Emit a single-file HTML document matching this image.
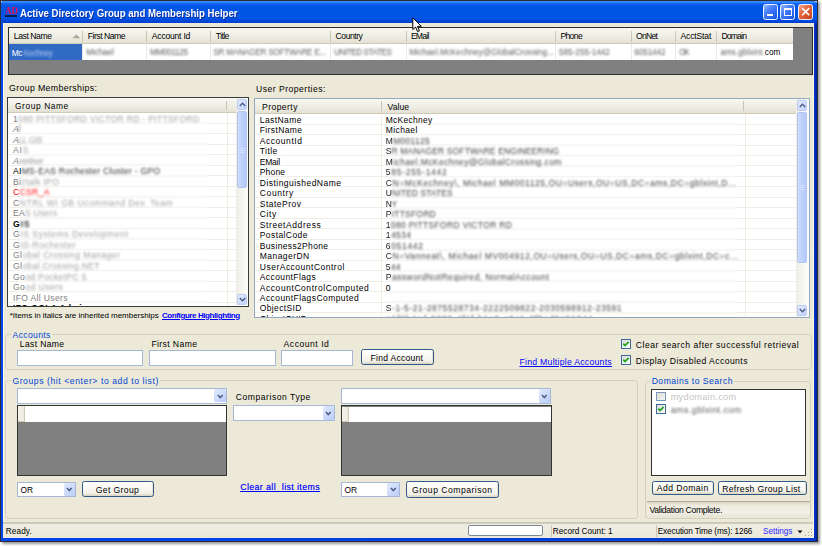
<!DOCTYPE html>
<html><head><meta charset="utf-8">
<style>
*{box-sizing:border-box;margin:0;padding:0}
html,body{width:822px;height:546px;overflow:hidden;background:#fff}
body{position:relative;font-family:"Liberation Sans",sans-serif;color:#000}
.a{position:absolute}
.t{position:absolute;white-space:pre;line-height:1;font-size:9.4px}
.s{font-size:8.4px}
.bl{filter:blur(0.8px)}
.lnk{color:#0000ff;text-decoration:underline}
.gb{position:absolute;border:1px solid #D0D0BF;border-radius:3px}
.gbl{position:absolute;white-space:pre;line-height:1;font-size:9.4px;color:#0046D5;background:#ECE9D8;padding:0 1px}
.tb{position:absolute;background:#fff;border:1px solid #7F9DB9}
.btn{position:absolute;border:1px solid #003C74;border-radius:2.5px;background:linear-gradient(#FFFFFF,#F6F5F0 60%,#E6E4DA);box-shadow:inset 0 -1px 0 #D8D2BD}
.cmb{position:absolute;background:#fff;border:1px solid #A5B9D5}
.cmbb{position:absolute;width:11px;background:linear-gradient(135deg,#DCE6FE,#B8CBF8);border-radius:1px}
.chk{position:absolute;width:10px;height:10px;border:1.2px solid #3D6A99;background:linear-gradient(135deg,#DCDCD7,#FFFFFF)}
.hdr{position:absolute;background:linear-gradient(#F8F7F1,#EEEDE3 60%,#E4E1D3);border-bottom:1.2px solid #D0CBB6}
.sb{position:absolute;border:1px solid #B2C6F5;border-radius:2px;background:linear-gradient(90deg,#CFDCFD,#BDD0FC 50%,#B6CAF9)}
.sbb{position:absolute;border:1px solid #BCCCF4;border-radius:2px;background:linear-gradient(135deg,#E4EBFE,#C3D3FD)}
</style></head><body>
<div class="a" style="left:1.00px;top:1.00px;width:817.00px;height:540.60px;box-shadow:1.5px 1.5px 2.5px 0.5px rgba(0,0,0,0.4)"></div>
<div class="a" style="left:0.00px;top:0.00px;width:818.00px;height:541.60px;background:#2C2E36"></div>
<div class="a" style="left:1.00px;top:0.80px;width:816.00px;height:540.00px;background:linear-gradient(90deg,#0046EE 0,#0046EE 2px,#003AD8 calc(100% - 3px),#001A90 100%)"></div>
<div class="a" style="left:1.00px;top:0.80px;width:816.00px;height:22.00px;background:linear-gradient(#3D8EFF 0,#2F82FF 1.5px,#0A5DF0 3px,#0055E4 6px,#0055E6 17px,#0047D9 20px,#003BCF 22px)"></div>
<div class="a" style="left:3.00px;top:22.80px;width:811.00px;height:515.20px;background:#ECE9D8"></div>
<div class="a" style="left:1.00px;top:1.00px;width:1.40px;height:1.40px;background:radial-gradient(circle,#F4F8FF 0,#BFD4FF 60%,rgba(60,140,255,0) 100%)"></div>
<div class="a" style="left:815.40px;top:1.00px;width:1.40px;height:1.40px;background:radial-gradient(circle,#E0EAFF 0,#A8C4FF 60%,rgba(60,140,255,0) 100%)"></div>
<div class="a" style="left:3.00px;top:22.80px;width:0.60px;height:515.20px;background:#FDF8E4"></div>
<div class="a" style="left:813.40px;top:22.80px;width:0.60px;height:515.20px;background:#FDF8E4"></div>
<div class="t" style="left:4.9px;top:6.1px;font-size:9.6px;font-weight:bold;color:#E8105A;letter-spacing:-0.2px;font-family:'Liberation Serif',serif;transform-origin:0 0;transform:scaleX(0.95)">AD</div>
<div class="a" style="left:4.90px;top:15.10px;width:11.80px;height:1.50px;background:#0A1E48"></div>
<div class="t" style="left:20px;top:7.6px;font-size:11.2px;font-weight:bold;color:#fff;text-shadow:0.8px 0.8px 0 #0B2690;transform-origin:0 0;transform:scaleX(0.862)">Active Directory Group and Membership Helper</div>
<div class="a" style="left:763.00px;top:4.40px;width:15.30px;height:15.60px;border:1px solid #F0F4FF;border-radius:2.5px;background:linear-gradient(135deg,#9BBCFF,#4C83F8 35%,#2C66F0 70%,#1E56E6)"></div>
<div class="a" style="left:780.20px;top:4.40px;width:15.30px;height:15.60px;border:1px solid #F0F4FF;border-radius:2.5px;background:linear-gradient(135deg,#9BBCFF,#4C83F8 35%,#2C66F0 70%,#1E56E6)"></div>
<div class="a" style="left:797.60px;top:4.40px;width:15.30px;height:15.60px;border:1px solid #F0F4FF;border-radius:2.5px;background:linear-gradient(135deg,#F4A890,#E46A44 40%,#D4502A 75%,#C23C18)"></div>
<div class="a" style="left:767.20px;top:14.20px;width:5.40px;height:2.00px;background:#fff"></div>
<div class="a" style="left:784.00px;top:7.80px;width:8.20px;height:8.40px;border:1.1px solid #fff;border-top-width:2.2px"></div>
<svg class="a" style="left:797.6px;top:4.4px" width="16" height="16" viewBox="0 0 16 16"><path d="M4.6 4.6 L10.8 10.8 M10.8 4.6 L4.6 10.8" stroke="#fff" stroke-width="1.6" stroke-linecap="round"/></svg>
<div class="a" style="left:7.50px;top:27.00px;width:805.50px;height:48.00px;background:#808080;border:1.3px solid #2C2C2C"></div>
<div class="hdr" style="left:8.8px;top:28.3px;width:784px;height:15.5px"></div>
<div class="a" style="left:8.80px;top:43.80px;width:784.00px;height:15.80px;background:#fff"></div>
<div class="a" style="left:8.80px;top:43.80px;width:74.20px;height:15.80px;background:#316AC5"></div>
<div class="t s" style="left:13.80px;top:31.63px;font-size:8.6px;color:#000;letter-spacing:-0.422px;">Last Name</div>
<div class="t s" style="left:87.80px;top:31.63px;font-size:8.6px;color:#000;letter-spacing:-0.482px;">First Name</div>
<div class="a" style="left:82.40px;top:30.80px;width:1.00px;height:11.00px;background:#CAC6B4"></div>
<div class="a" style="left:82.40px;top:43.80px;width:1.00px;height:15.80px;background:#EDEBE3"></div>
<div class="t s" style="left:151.80px;top:31.63px;font-size:8.6px;color:#000;letter-spacing:-0.225px;">Account Id</div>
<div class="a" style="left:146.40px;top:30.80px;width:1.00px;height:11.00px;background:#CAC6B4"></div>
<div class="a" style="left:146.40px;top:43.80px;width:1.00px;height:15.80px;background:#EDEBE3"></div>
<div class="t s" style="left:215.80px;top:31.63px;font-size:8.6px;color:#000;letter-spacing:-0.584px;">Title</div>
<div class="a" style="left:210.40px;top:30.80px;width:1.00px;height:11.00px;background:#CAC6B4"></div>
<div class="a" style="left:210.40px;top:43.80px;width:1.00px;height:15.80px;background:#EDEBE3"></div>
<div class="t s" style="left:335.60px;top:31.63px;font-size:8.6px;color:#000;letter-spacing:-0.466px;">Country</div>
<div class="a" style="left:330.20px;top:30.80px;width:1.00px;height:11.00px;background:#CAC6B4"></div>
<div class="a" style="left:330.20px;top:43.80px;width:1.00px;height:15.80px;background:#EDEBE3"></div>
<div class="t s" style="left:410.90px;top:31.63px;font-size:8.6px;color:#000;letter-spacing:-0.770px;">EMail</div>
<div class="a" style="left:405.50px;top:30.80px;width:1.00px;height:11.00px;background:#CAC6B4"></div>
<div class="a" style="left:405.50px;top:43.80px;width:1.00px;height:15.80px;background:#EDEBE3"></div>
<div class="t s" style="left:560.40px;top:31.63px;font-size:8.6px;color:#000;letter-spacing:-0.643px;">Phone</div>
<div class="a" style="left:555.00px;top:30.80px;width:1.00px;height:11.00px;background:#CAC6B4"></div>
<div class="a" style="left:555.00px;top:43.80px;width:1.00px;height:15.80px;background:#EDEBE3"></div>
<div class="t s" style="left:636.00px;top:31.63px;font-size:8.6px;color:#000;letter-spacing:-0.762px;">OnNet</div>
<div class="a" style="left:630.60px;top:30.80px;width:1.00px;height:11.00px;background:#CAC6B4"></div>
<div class="a" style="left:630.60px;top:43.80px;width:1.00px;height:15.80px;background:#EDEBE3"></div>
<div class="t s" style="left:680.50px;top:31.63px;font-size:8.6px;color:#000;letter-spacing:-0.173px;">AcctStat</div>
<div class="a" style="left:675.10px;top:30.80px;width:1.00px;height:11.00px;background:#CAC6B4"></div>
<div class="a" style="left:675.10px;top:43.80px;width:1.00px;height:15.80px;background:#EDEBE3"></div>
<div class="t s" style="left:721.40px;top:31.63px;font-size:8.6px;color:#000;letter-spacing:-0.807px;">Domain</div>
<div class="a" style="left:716.00px;top:30.80px;width:1.00px;height:11.00px;background:#CAC6B4"></div>
<div class="a" style="left:716.00px;top:43.80px;width:1.00px;height:15.80px;background:#EDEBE3"></div>
<svg class="a" style="left:72.2px;top:33.8px" width="9" height="5" viewBox="0 0 9 5"><path d="M0.4 4.3 L4.3 0.4 L8.2 4.3Z" fill="#ACA899"/></svg>
<div class="t s" style="left:11.80px;top:49.26px;font-size:8.4px;color:#fff;letter-spacing:-0.476px;">Mc</div>
<div class="t s" style="left:23.80px;top:49.26px;font-size:8.4px;color:#B0C6EE;letter-spacing:-0.567px;filter:blur(1.1px);">Kechney</div>
<div class="t s" style="left:86.30px;top:49.28px;font-size:8.2px;color:#4A4A4A;letter-spacing:-0.116px;filter:blur(0.85px);opacity:0.9;">Michael</div>
<div class="t s" style="left:150.00px;top:49.28px;font-size:8.2px;color:#4A4A4A;letter-spacing:-0.328px;filter:blur(0.85px);opacity:0.9;">MM001125</div>
<div class="t s" style="left:213.40px;top:49.28px;font-size:8.2px;color:#4A4A4A;letter-spacing:-0.235px;filter:blur(0.85px);opacity:0.9;">SR MANAGER SOFTWARE E...</div>
<div class="t s" style="left:334.00px;top:49.28px;font-size:8.2px;color:#4A4A4A;letter-spacing:-0.452px;filter:blur(0.85px);opacity:0.9;">UNITED STATES</div>
<div class="t s" style="left:409.50px;top:49.28px;font-size:8.2px;color:#4A4A4A;letter-spacing:-0.003px;filter:blur(0.85px);opacity:0.9;">Michael.McKechney@GlobalCrossing...</div>
<div class="t s" style="left:559.00px;top:49.28px;font-size:8.2px;color:#4A4A4A;letter-spacing:-0.012px;filter:blur(0.85px);opacity:0.9;">585-255-1442</div>
<div class="t s" style="left:634.30px;top:49.28px;font-size:8.2px;color:#4A4A4A;letter-spacing:-0.103px;filter:blur(0.85px);opacity:0.9;">6051442</div>
<div class="t s" style="left:679.20px;top:49.28px;font-size:8.2px;color:#4A4A4A;letter-spacing:-1.368px;filter:blur(0.85px);opacity:0.9;">OK</div>
<div class="t s" style="left:720.40px;top:49.28px;font-size:8.2px;color:#4A4A4A;letter-spacing:0.054px;filter:blur(0.85px);opacity:0.9;">ams.gblxint.</div>
<div class="t s" style="left:764.80px;top:49.28px;font-size:8.2px;color:#000;">com</div>
<div class="t" style="left:9.00px;top:83.91px;font-size:8.8px;color:#000;letter-spacing:0.342px;">Group Memberships:</div>
<div class="t" style="left:256.00px;top:84.83px;font-size:8.6px;color:#000;letter-spacing:0.487px;">User Properties:</div>
<div class="a" style="left:7.3px;top:97.3px;width:241.70px;height:209.40px;background:#fff;border:1.4px solid #3A3A3A;overflow:hidden">
 <div class="hdr" style="left:0;top:0;width:228.10px;height:14.30px"></div>
 <div class="a" style="left:218.10px;top:2.30px;width:1.00px;height:9.50px;background:#C9C5B4"></div>
 <div class="t" style="left:6.70px;top:3.46px;font-size:8.4px;color:#000;letter-spacing:0.590px;">Group Name</div>
 <div class="a" style="left:0.30px;top:24.33px;width:11.50px;height:1.00px;background:#EFEDE4"></div>
 <div class="a" style="left:11.80px;top:23.03px;width:187.30px;height:3.60px;background:linear-gradient(rgba(239,237,228,0),rgba(239,237,228,0.55) 50%,rgba(239,237,228,0))"></div>
 <div class="a" style="left:199.10px;top:24.33px;width:29.00px;height:1.00px;background:#EFEDE4"></div>
 <div class="t" style="left:4.70px;top:16.23px;font-size:8.6px;color:#808080;letter-spacing:0.291px;">1<span style="display:inline-block;filter:blur(0.8px);opacity:0.75">080 PITTSFORD VICTOR RD - PITTSFORD</span></div>
 <div class="a" style="left:0.30px;top:34.87px;width:11.50px;height:1.00px;background:#EFEDE4"></div>
 <div class="a" style="left:11.80px;top:33.57px;width:187.30px;height:3.60px;background:linear-gradient(rgba(239,237,228,0),rgba(239,237,228,0.55) 50%,rgba(239,237,228,0))"></div>
 <div class="a" style="left:199.10px;top:34.87px;width:29.00px;height:1.00px;background:#EFEDE4"></div>
 <div class="t" style="left:4.70px;top:26.77px;font-size:8.6px;color:#808080;letter-spacing:-1.071px;font-style:italic;">A<span style="display:inline-block;filter:blur(0.8px);opacity:0.75">ll</span></div>
 <div class="a" style="left:0.30px;top:45.40px;width:11.50px;height:1.00px;background:#EFEDE4"></div>
 <div class="a" style="left:11.80px;top:44.10px;width:187.30px;height:3.60px;background:linear-gradient(rgba(239,237,228,0),rgba(239,237,228,0.55) 50%,rgba(239,237,228,0))"></div>
 <div class="a" style="left:199.10px;top:45.40px;width:29.00px;height:1.00px;background:#EFEDE4"></div>
 <div class="t" style="left:4.70px;top:37.30px;font-size:8.6px;color:#808080;letter-spacing:-0.458px;font-style:italic;">A<span style="display:inline-block;filter:blur(0.8px);opacity:0.75">LL GIS</span></div>
 <div class="a" style="left:0.30px;top:55.94px;width:11.50px;height:1.00px;background:#EFEDE4"></div>
 <div class="a" style="left:11.80px;top:54.64px;width:187.30px;height:3.60px;background:linear-gradient(rgba(239,237,228,0),rgba(239,237,228,0.55) 50%,rgba(239,237,228,0))"></div>
 <div class="a" style="left:199.10px;top:55.94px;width:29.00px;height:1.00px;background:#EFEDE4"></div>
 <div class="t" style="left:4.70px;top:47.84px;font-size:8.6px;color:#808080;letter-spacing:0.840px;">AI<span style="display:inline-block;filter:blur(0.8px);opacity:0.75">S</span></div>
 <div class="a" style="left:0.30px;top:66.47px;width:11.50px;height:1.00px;background:#EFEDE4"></div>
 <div class="a" style="left:11.80px;top:65.17px;width:187.30px;height:3.60px;background:linear-gradient(rgba(239,237,228,0),rgba(239,237,228,0.55) 50%,rgba(239,237,228,0))"></div>
 <div class="a" style="left:199.10px;top:66.47px;width:29.00px;height:1.00px;background:#EFEDE4"></div>
 <div class="t" style="left:4.70px;top:58.37px;font-size:8.6px;color:#808080;letter-spacing:-0.411px;font-style:italic;">A<span style="display:inline-block;filter:blur(0.8px);opacity:0.75">vertiser</span></div>
 <div class="a" style="left:0.30px;top:77.01px;width:11.50px;height:1.00px;background:#EFEDE4"></div>
 <div class="a" style="left:11.80px;top:75.71px;width:187.30px;height:3.60px;background:linear-gradient(rgba(239,237,228,0),rgba(239,237,228,0.55) 50%,rgba(239,237,228,0))"></div>
 <div class="a" style="left:199.10px;top:77.01px;width:29.00px;height:1.00px;background:#EFEDE4"></div>
 <div class="t" style="left:4.70px;top:68.91px;font-size:8.6px;color:#000000;letter-spacing:0.265px;">AI<span style="display:inline-block;filter:blur(0.8px);opacity:0.85">MS-EAS Rochester Cluster - GPO</span></div>
 <div class="a" style="left:0.30px;top:87.55px;width:11.50px;height:1.00px;background:#EFEDE4"></div>
 <div class="a" style="left:11.80px;top:86.24px;width:187.30px;height:3.60px;background:linear-gradient(rgba(239,237,228,0),rgba(239,237,228,0.55) 50%,rgba(239,237,228,0))"></div>
 <div class="a" style="left:199.10px;top:87.55px;width:29.00px;height:1.00px;background:#EFEDE4"></div>
 <div class="t" style="left:4.70px;top:79.44px;font-size:8.6px;color:#808080;letter-spacing:0.338px;">Bi<span style="display:inline-block;filter:blur(0.8px);opacity:0.75">ztalk IPO</span></div>
 <div class="a" style="left:0.30px;top:98.08px;width:11.50px;height:1.00px;background:#EFEDE4"></div>
 <div class="a" style="left:11.80px;top:96.78px;width:187.30px;height:3.60px;background:linear-gradient(rgba(239,237,228,0),rgba(239,237,228,0.55) 50%,rgba(239,237,228,0))"></div>
 <div class="a" style="left:199.10px;top:98.08px;width:29.00px;height:1.00px;background:#EFEDE4"></div>
 <div class="t" style="left:4.70px;top:89.98px;font-size:8.6px;color:#FF0000;letter-spacing:0.314px;">C<span style="display:inline-block;filter:blur(0.8px);opacity:0.95">CSR_A</span></div>
 <div class="a" style="left:0.30px;top:108.61px;width:11.50px;height:1.00px;background:#EFEDE4"></div>
 <div class="a" style="left:11.80px;top:107.31px;width:187.30px;height:3.60px;background:linear-gradient(rgba(239,237,228,0),rgba(239,237,228,0.55) 50%,rgba(239,237,228,0))"></div>
 <div class="a" style="left:199.10px;top:108.61px;width:29.00px;height:1.00px;background:#EFEDE4"></div>
 <div class="t" style="left:4.70px;top:100.51px;font-size:8.6px;color:#808080;letter-spacing:0.506px;">C<span style="display:inline-block;filter:blur(0.8px);opacity:0.75">NTRL WI GB Ucommand Dev. Team</span></div>
 <div class="a" style="left:0.30px;top:119.15px;width:11.50px;height:1.00px;background:#EFEDE4"></div>
 <div class="a" style="left:11.80px;top:117.85px;width:187.30px;height:3.60px;background:linear-gradient(rgba(239,237,228,0),rgba(239,237,228,0.55) 50%,rgba(239,237,228,0))"></div>
 <div class="a" style="left:199.10px;top:119.15px;width:29.00px;height:1.00px;background:#EFEDE4"></div>
 <div class="t" style="left:4.70px;top:111.05px;font-size:8.6px;color:#808080;letter-spacing:0.247px;">EA<span style="display:inline-block;filter:blur(0.8px);opacity:0.75">S Users</span></div>
 <div class="a" style="left:0.30px;top:129.69px;width:11.50px;height:1.00px;background:#EFEDE4"></div>
 <div class="a" style="left:11.80px;top:128.38px;width:187.30px;height:3.60px;background:linear-gradient(rgba(239,237,228,0),rgba(239,237,228,0.55) 50%,rgba(239,237,228,0))"></div>
 <div class="a" style="left:199.10px;top:129.69px;width:29.00px;height:1.00px;background:#EFEDE4"></div>
 <div class="t" style="left:4.70px;top:121.58px;font-size:8.6px;color:#000000;letter-spacing:0.814px;font-weight:bold;">G<span style="display:inline-block;filter:blur(0.8px);opacity:0.85">IS</span></div>
 <div class="a" style="left:0.30px;top:140.22px;width:11.50px;height:1.00px;background:#EFEDE4"></div>
 <div class="a" style="left:11.80px;top:138.92px;width:187.30px;height:3.60px;background:linear-gradient(rgba(239,237,228,0),rgba(239,237,228,0.55) 50%,rgba(239,237,228,0))"></div>
 <div class="a" style="left:199.10px;top:140.22px;width:29.00px;height:1.00px;background:#EFEDE4"></div>
 <div class="t" style="left:4.70px;top:132.12px;font-size:8.6px;color:#808080;letter-spacing:0.542px;">G<span style="display:inline-block;filter:blur(0.8px);opacity:0.75">IS Systems Development</span></div>
 <div class="a" style="left:0.30px;top:150.75px;width:11.50px;height:1.00px;background:#EFEDE4"></div>
 <div class="a" style="left:11.80px;top:149.45px;width:187.30px;height:3.60px;background:linear-gradient(rgba(239,237,228,0),rgba(239,237,228,0.55) 50%,rgba(239,237,228,0))"></div>
 <div class="a" style="left:199.10px;top:150.75px;width:29.00px;height:1.00px;background:#EFEDE4"></div>
 <div class="t" style="left:4.70px;top:142.65px;font-size:8.6px;color:#808080;letter-spacing:0.477px;">G<span style="display:inline-block;filter:blur(0.8px);opacity:0.75">IS-Rochester</span></div>
 <div class="a" style="left:0.30px;top:161.29px;width:11.50px;height:1.00px;background:#EFEDE4"></div>
 <div class="a" style="left:11.80px;top:159.99px;width:187.30px;height:3.60px;background:linear-gradient(rgba(239,237,228,0),rgba(239,237,228,0.55) 50%,rgba(239,237,228,0))"></div>
 <div class="a" style="left:199.10px;top:161.29px;width:29.00px;height:1.00px;background:#EFEDE4"></div>
 <div class="t" style="left:4.70px;top:153.19px;font-size:8.6px;color:#808080;letter-spacing:0.424px;">Gl<span style="display:inline-block;filter:blur(0.8px);opacity:0.75">obal Crossing Manager</span></div>
 <div class="a" style="left:0.30px;top:171.83px;width:11.50px;height:1.00px;background:#EFEDE4"></div>
 <div class="a" style="left:11.80px;top:170.53px;width:187.30px;height:3.60px;background:linear-gradient(rgba(239,237,228,0),rgba(239,237,228,0.55) 50%,rgba(239,237,228,0))"></div>
 <div class="a" style="left:199.10px;top:171.83px;width:29.00px;height:1.00px;background:#EFEDE4"></div>
 <div class="t" style="left:4.70px;top:163.72px;font-size:8.6px;color:#808080;letter-spacing:0.324px;">Gl<span style="display:inline-block;filter:blur(0.8px);opacity:0.75">obal.Crossing.NET</span></div>
 <div class="a" style="left:0.30px;top:182.36px;width:11.50px;height:1.00px;background:#EFEDE4"></div>
 <div class="a" style="left:11.80px;top:181.06px;width:187.30px;height:3.60px;background:linear-gradient(rgba(239,237,228,0),rgba(239,237,228,0.55) 50%,rgba(239,237,228,0))"></div>
 <div class="a" style="left:199.10px;top:182.36px;width:29.00px;height:1.00px;background:#EFEDE4"></div>
 <div class="t" style="left:4.70px;top:174.26px;font-size:8.6px;color:#808080;letter-spacing:0.335px;">Go<span style="display:inline-block;filter:blur(0.8px);opacity:0.75">od PocketPC 5</span></div>
 <div class="a" style="left:0.30px;top:192.90px;width:11.50px;height:1.00px;background:#EFEDE4"></div>
 <div class="a" style="left:11.80px;top:191.60px;width:187.30px;height:3.60px;background:linear-gradient(rgba(239,237,228,0),rgba(239,237,228,0.55) 50%,rgba(239,237,228,0))"></div>
 <div class="a" style="left:199.10px;top:192.90px;width:29.00px;height:1.00px;background:#EFEDE4"></div>
 <div class="t" style="left:4.70px;top:184.79px;font-size:8.6px;color:#808080;letter-spacing:0.427px;">Go<span style="display:inline-block;filter:blur(0.8px);opacity:0.75">od Users</span></div>
 <div class="a" style="left:0.30px;top:203.43px;width:11.50px;height:1.00px;background:#EFEDE4"></div>
 <div class="a" style="left:11.80px;top:202.13px;width:187.30px;height:3.60px;background:linear-gradient(rgba(239,237,228,0),rgba(239,237,228,0.55) 50%,rgba(239,237,228,0))"></div>
 <div class="a" style="left:199.10px;top:203.43px;width:29.00px;height:1.00px;background:#EFEDE4"></div>
 <div class="t" style="left:4.70px;top:195.33px;font-size:8.6px;color:#808080;letter-spacing:0.326px;">IFO All Users</div>
 <div class="a" style="left:0.30px;top:213.97px;width:11.50px;height:1.00px;background:#EFEDE4"></div>
 <div class="a" style="left:11.80px;top:212.67px;width:187.30px;height:3.60px;background:linear-gradient(rgba(239,237,228,0),rgba(239,237,228,0.55) 50%,rgba(239,237,228,0))"></div>
 <div class="a" style="left:199.10px;top:213.97px;width:29.00px;height:1.00px;background:#EFEDE4"></div>
 <div class="t" style="left:4.70px;top:205.86px;font-size:8.6px;color:#000000;letter-spacing:0.276px;font-weight:bold;">IFO-GOLA Admins</div>
 <div class="a" style="left:219.20px;top:14.30px;width:1.00px;height:193.00px;background:#EFEDE4"></div>
 <div class="a" style="left:228.10px;top:0.00px;width:11.20px;height:206.70px;background:linear-gradient(90deg,#EEEDE5,#FDFDFA)"></div>
 <div class="a" style="left:228.40px;top:0.70px;width:10.50px;height:11.20px;border:1px solid #BCCCF4;border-radius:2px;background:linear-gradient(135deg,#E4EBFE,#C3D3FD)"></div>
 <svg class="a" style="left:230.60px;top:3.90px" width="7" height="5" viewBox="0 0 7 5"><path d="M0.7 4 L3.5 1.2 L6.3 4" stroke="#4D6185" stroke-width="1.4" fill="none"/></svg>
 <div class="a" style="left:228.40px;top:12.30px;width:10.50px;height:77.80px;border:1px solid #B2C6F5;border-radius:2px;background:linear-gradient(90deg,#CFDCFD,#BDD0FC 50%,#B6CAF9)"></div>
 <div class="a" style="left:231.30px;top:49.30px;width:5.00px;height:1.00px;background:#D4E0FD"></div>
 <div class="a" style="left:231.30px;top:51.30px;width:5.00px;height:1.00px;background:#D4E0FD"></div>
 <div class="a" style="left:231.30px;top:53.30px;width:5.00px;height:1.00px;background:#D4E0FD"></div>
 <div class="a" style="left:228.40px;top:195.50px;width:10.50px;height:11.00px;border:1px solid #BCCCF4;border-radius:2px;background:linear-gradient(135deg,#E4EBFE,#C3D3FD)"></div>
 <svg class="a" style="left:230.60px;top:198.70px" width="7" height="5" viewBox="0 0 7 5"><path d="M0.7 1 L3.5 3.8 L6.3 1" stroke="#4D6185" stroke-width="1.4" fill="none"/></svg>
</div>
<div class="t s" style="left:9.70px;top:311.81px;font-size:8.0px;color:#000;letter-spacing:-0.028px;">*Items in italics are inherited memberships</div>
<div class="t s" style="left:162.00px;top:311.81px;font-size:8.0px;color:#0000FF;letter-spacing:-0.408px;font-weight:bold;text-decoration:underline;text-underline-offset:0.9px;">Configure Highlighting</div>
<div class="a" style="left:253.6px;top:97.8px;width:556.40px;height:220.20px;background:#fff;border:1px solid #93A9C2;overflow:hidden">
 <div class="hdr" style="left:0;top:0;width:541.80px;height:14.80px"></div>
 <div class="a" style="left:126.00px;top:2.70px;width:1.00px;height:9.50px;background:#C9C5B4"></div>
 <div class="a" style="left:488.30px;top:2.70px;width:1.00px;height:9.50px;background:#C9C5B4"></div>
 <div class="t" style="left:7.40px;top:3.83px;font-size:8.6px;color:#000;letter-spacing:0.431px;">Property</div>
 <div class="t" style="left:133.00px;top:3.83px;font-size:8.6px;color:#000;">Value</div>
 <div class="a" style="left:0.00px;top:24.78px;width:134.40px;height:1.00px;background:#EFEDE4"></div>
 <div class="a" style="left:134.40px;top:23.48px;width:347.30px;height:3.60px;background:linear-gradient(rgba(239,237,228,0),rgba(239,237,228,0.55) 50%,rgba(239,237,228,0))"></div>
 <div class="a" style="left:481.70px;top:24.78px;width:60.10px;height:1.00px;background:#EFEDE4"></div>
 <div class="t" style="left:5.20px;top:17.05px;font-size:8.5px;color:#000;letter-spacing:0.427px;">LastName</div>
 <div class="t" style="left:131.20px;top:17.05px;font-size:8.5px;color:#000;letter-spacing:0.255px;">McKechney</div>
 <div class="a" style="left:0.00px;top:35.26px;width:134.40px;height:1.00px;background:#EFEDE4"></div>
 <div class="a" style="left:134.40px;top:33.96px;width:347.30px;height:3.60px;background:linear-gradient(rgba(239,237,228,0),rgba(239,237,228,0.55) 50%,rgba(239,237,228,0))"></div>
 <div class="a" style="left:481.70px;top:35.26px;width:60.10px;height:1.00px;background:#EFEDE4"></div>
 <div class="t" style="left:5.20px;top:27.53px;font-size:8.5px;color:#000;letter-spacing:0.366px;">FirstName</div>
 <div class="t" style="left:131.20px;top:27.53px;font-size:8.5px;color:#000;letter-spacing:0.383px;">Michael</div>
 <div class="a" style="left:0.00px;top:45.74px;width:134.40px;height:1.00px;background:#EFEDE4"></div>
 <div class="a" style="left:134.40px;top:44.44px;width:347.30px;height:3.60px;background:linear-gradient(rgba(239,237,228,0),rgba(239,237,228,0.55) 50%,rgba(239,237,228,0))"></div>
 <div class="a" style="left:481.70px;top:45.74px;width:60.10px;height:1.00px;background:#EFEDE4"></div>
 <div class="t" style="left:5.20px;top:38.01px;font-size:8.5px;color:#000;letter-spacing:0.541px;">AccountId</div>
 <div class="t" style="left:131.20px;top:38.01px;font-size:8.5px;color:#000;letter-spacing:0.290px"><span style="display:inline-block;filter:blur(0.55px);opacity:0.9">M</span><span style="display:inline-block;filter:blur(0.8px);opacity:0.78">M001125</span></div>
 <div class="a" style="left:0.00px;top:56.22px;width:134.40px;height:1.00px;background:#EFEDE4"></div>
 <div class="a" style="left:134.40px;top:54.92px;width:347.30px;height:3.60px;background:linear-gradient(rgba(239,237,228,0),rgba(239,237,228,0.55) 50%,rgba(239,237,228,0))"></div>
 <div class="a" style="left:481.70px;top:56.22px;width:60.10px;height:1.00px;background:#EFEDE4"></div>
 <div class="t" style="left:5.20px;top:48.48px;font-size:8.5px;color:#000;letter-spacing:0.421px;">Title</div>
 <div class="t" style="left:131.20px;top:48.48px;font-size:8.5px;color:#000;letter-spacing:0.133px"><span style="display:inline-block;filter:blur(0.55px);opacity:0.9">S</span><span style="display:inline-block;filter:blur(0.8px);opacity:0.78">R MANAGER SOFTWARE ENGINEERING</span></div>
 <div class="a" style="left:0.00px;top:66.70px;width:134.40px;height:1.00px;background:#EFEDE4"></div>
 <div class="a" style="left:134.40px;top:65.40px;width:347.30px;height:3.60px;background:linear-gradient(rgba(239,237,228,0),rgba(239,237,228,0.55) 50%,rgba(239,237,228,0))"></div>
 <div class="a" style="left:481.70px;top:66.70px;width:60.10px;height:1.00px;background:#EFEDE4"></div>
 <div class="t" style="left:5.20px;top:58.96px;font-size:8.5px;color:#000;letter-spacing:-0.241px;">EMail</div>
 <div class="t" style="left:131.20px;top:58.96px;font-size:8.5px;color:#000;letter-spacing:0.410px"><span style="display:inline-block;filter:blur(0.55px);opacity:0.9">M</span><span style="display:inline-block;filter:blur(0.8px);opacity:0.78">ichael.McKechney@GlobalCrossing.com</span></div>
 <div class="a" style="left:0.00px;top:77.18px;width:134.40px;height:1.00px;background:#EFEDE4"></div>
 <div class="a" style="left:134.40px;top:75.88px;width:347.30px;height:3.60px;background:linear-gradient(rgba(239,237,228,0),rgba(239,237,228,0.55) 50%,rgba(239,237,228,0))"></div>
 <div class="a" style="left:481.70px;top:77.18px;width:60.10px;height:1.00px;background:#EFEDE4"></div>
 <div class="t" style="left:5.20px;top:69.45px;font-size:8.5px;color:#000;letter-spacing:0.162px;">Phone</div>
 <div class="t" style="left:131.20px;top:69.45px;font-size:8.5px;color:#000;letter-spacing:0.727px"><span style="display:inline-block;filter:blur(0.55px);opacity:0.9">5</span><span style="display:inline-block;filter:blur(0.8px);opacity:0.78">85-255-1442</span></div>
 <div class="a" style="left:0.00px;top:87.66px;width:134.40px;height:1.00px;background:#EFEDE4"></div>
 <div class="a" style="left:134.40px;top:86.36px;width:347.30px;height:3.60px;background:linear-gradient(rgba(239,237,228,0),rgba(239,237,228,0.55) 50%,rgba(239,237,228,0))"></div>
 <div class="a" style="left:481.70px;top:87.66px;width:60.10px;height:1.00px;background:#EFEDE4"></div>
 <div class="t" style="left:5.20px;top:79.92px;font-size:8.5px;color:#000;letter-spacing:0.464px;">DistinguishedName</div>
 <div class="t" style="left:131.20px;top:79.92px;font-size:8.5px;color:#000;letter-spacing:0.566px"><span style="display:inline-block;filter:blur(0.55px);opacity:0.9">C</span><span style="display:inline-block;filter:blur(0.8px);opacity:0.78">N=McKechney\, Michael MM001125,OU=Users,OU=US,DC=ams,DC=gblxint,D...</span></div>
 <div class="a" style="left:0.00px;top:98.14px;width:134.40px;height:1.00px;background:#EFEDE4"></div>
 <div class="a" style="left:134.40px;top:96.84px;width:347.30px;height:3.60px;background:linear-gradient(rgba(239,237,228,0),rgba(239,237,228,0.55) 50%,rgba(239,237,228,0))"></div>
 <div class="a" style="left:481.70px;top:98.14px;width:60.10px;height:1.00px;background:#EFEDE4"></div>
 <div class="t" style="left:5.20px;top:90.40px;font-size:8.5px;color:#000;letter-spacing:0.615px;">Country</div>
 <div class="t" style="left:131.20px;top:90.40px;font-size:8.5px;color:#000;letter-spacing:0.089px"><span style="display:inline-block;filter:blur(0.55px);opacity:0.9">U</span><span style="display:inline-block;filter:blur(0.8px);opacity:0.78">NITED STATES</span></div>
 <div class="a" style="left:0.00px;top:108.62px;width:134.40px;height:1.00px;background:#EFEDE4"></div>
 <div class="a" style="left:134.40px;top:107.32px;width:347.30px;height:3.60px;background:linear-gradient(rgba(239,237,228,0),rgba(239,237,228,0.55) 50%,rgba(239,237,228,0))"></div>
 <div class="a" style="left:481.70px;top:108.62px;width:60.10px;height:1.00px;background:#EFEDE4"></div>
 <div class="t" style="left:5.20px;top:100.89px;font-size:8.5px;color:#000;letter-spacing:0.491px;">StateProv</div>
 <div class="t" style="left:131.20px;top:100.89px;font-size:8.5px;color:#000;letter-spacing:-0.438px"><span style="display:inline-block;filter:blur(0.55px);opacity:0.9">N</span><span style="display:inline-block;filter:blur(0.8px);opacity:0.78">Y</span></div>
 <div class="a" style="left:0.00px;top:119.10px;width:134.40px;height:1.00px;background:#EFEDE4"></div>
 <div class="a" style="left:134.40px;top:117.80px;width:347.30px;height:3.60px;background:linear-gradient(rgba(239,237,228,0),rgba(239,237,228,0.55) 50%,rgba(239,237,228,0))"></div>
 <div class="a" style="left:481.70px;top:119.10px;width:60.10px;height:1.00px;background:#EFEDE4"></div>
 <div class="t" style="left:5.20px;top:111.37px;font-size:8.5px;color:#000;letter-spacing:0.604px;">City</div>
 <div class="t" style="left:131.20px;top:111.37px;font-size:8.5px;color:#000;letter-spacing:0.209px"><span style="display:inline-block;filter:blur(0.55px);opacity:0.9">P</span><span style="display:inline-block;filter:blur(0.8px);opacity:0.78">ITTSFORD</span></div>
 <div class="a" style="left:0.00px;top:129.58px;width:134.40px;height:1.00px;background:#EFEDE4"></div>
 <div class="a" style="left:134.40px;top:128.28px;width:347.30px;height:3.60px;background:linear-gradient(rgba(239,237,228,0),rgba(239,237,228,0.55) 50%,rgba(239,237,228,0))"></div>
 <div class="a" style="left:481.70px;top:129.58px;width:60.10px;height:1.00px;background:#EFEDE4"></div>
 <div class="t" style="left:5.20px;top:121.85px;font-size:8.5px;color:#000;letter-spacing:0.591px;">StreetAddress</div>
 <div class="t" style="left:131.20px;top:121.85px;font-size:8.5px;color:#000;letter-spacing:0.337px"><span style="display:inline-block;filter:blur(0.55px);opacity:0.9">1</span><span style="display:inline-block;filter:blur(0.8px);opacity:0.78">080 PITTSFORD VICTOR RD</span></div>
 <div class="a" style="left:0.00px;top:140.06px;width:134.40px;height:1.00px;background:#EFEDE4"></div>
 <div class="a" style="left:134.40px;top:138.76px;width:347.30px;height:3.60px;background:linear-gradient(rgba(239,237,228,0),rgba(239,237,228,0.55) 50%,rgba(239,237,228,0))"></div>
 <div class="a" style="left:481.70px;top:140.06px;width:60.10px;height:1.00px;background:#EFEDE4"></div>
 <div class="t" style="left:5.20px;top:132.32px;font-size:8.5px;color:#000;letter-spacing:0.409px;">PostalCode</div>
 <div class="t" style="left:131.20px;top:132.32px;font-size:8.5px;color:#000;letter-spacing:0.373px"><span style="display:inline-block;filter:blur(0.55px);opacity:0.9">1</span><span style="display:inline-block;filter:blur(0.8px);opacity:0.78">4534</span></div>
 <div class="a" style="left:0.00px;top:150.54px;width:134.40px;height:1.00px;background:#EFEDE4"></div>
 <div class="a" style="left:134.40px;top:149.24px;width:347.30px;height:3.60px;background:linear-gradient(rgba(239,237,228,0),rgba(239,237,228,0.55) 50%,rgba(239,237,228,0))"></div>
 <div class="a" style="left:481.70px;top:150.54px;width:60.10px;height:1.00px;background:#EFEDE4"></div>
 <div class="t" style="left:5.20px;top:142.81px;font-size:8.5px;color:#000;letter-spacing:0.341px;">Business2Phone</div>
 <div class="t" style="left:131.20px;top:142.81px;font-size:8.5px;color:#000;letter-spacing:0.673px"><span style="display:inline-block;filter:blur(0.55px);opacity:0.9">6</span><span style="display:inline-block;filter:blur(0.8px);opacity:0.78">051442</span></div>
 <div class="a" style="left:0.00px;top:161.02px;width:134.40px;height:1.00px;background:#EFEDE4"></div>
 <div class="a" style="left:134.40px;top:159.72px;width:347.30px;height:3.60px;background:linear-gradient(rgba(239,237,228,0),rgba(239,237,228,0.55) 50%,rgba(239,237,228,0))"></div>
 <div class="a" style="left:481.70px;top:161.02px;width:60.10px;height:1.00px;background:#EFEDE4"></div>
 <div class="t" style="left:5.20px;top:153.29px;font-size:8.5px;color:#000;letter-spacing:0.439px;">ManagerDN</div>
 <div class="t" style="left:131.20px;top:153.29px;font-size:8.5px;color:#000;letter-spacing:0.570px"><span style="display:inline-block;filter:blur(0.55px);opacity:0.9">C</span><span style="display:inline-block;filter:blur(0.8px);opacity:0.78">N=Vanneat\, Michael MV004912,OU=Users,OU=US,DC=ams,DC=gblxint,DC=c...</span></div>
 <div class="a" style="left:0.00px;top:171.50px;width:134.40px;height:1.00px;background:#EFEDE4"></div>
 <div class="a" style="left:134.40px;top:170.20px;width:347.30px;height:3.60px;background:linear-gradient(rgba(239,237,228,0),rgba(239,237,228,0.55) 50%,rgba(239,237,228,0))"></div>
 <div class="a" style="left:481.70px;top:171.50px;width:60.10px;height:1.00px;background:#EFEDE4"></div>
 <div class="t" style="left:5.20px;top:163.76px;font-size:8.5px;color:#000;letter-spacing:0.496px;">UserAccountControl</div>
 <div class="t" style="left:131.20px;top:163.76px;font-size:8.5px;color:#000;letter-spacing:0.273px"><span style="display:inline-block;filter:blur(0.55px);opacity:0.9">5</span><span style="display:inline-block;filter:blur(0.8px);opacity:0.78">44</span></div>
 <div class="a" style="left:0.00px;top:181.98px;width:134.40px;height:1.00px;background:#EFEDE4"></div>
 <div class="a" style="left:134.40px;top:180.68px;width:347.30px;height:3.60px;background:linear-gradient(rgba(239,237,228,0),rgba(239,237,228,0.55) 50%,rgba(239,237,228,0))"></div>
 <div class="a" style="left:481.70px;top:181.98px;width:60.10px;height:1.00px;background:#EFEDE4"></div>
 <div class="t" style="left:5.20px;top:174.24px;font-size:8.5px;color:#000;letter-spacing:0.405px;">AccountFlags</div>
 <div class="t" style="left:131.20px;top:174.24px;font-size:8.5px;color:#000;letter-spacing:0.460px"><span style="display:inline-block;filter:blur(0.55px);opacity:0.9">P</span><span style="display:inline-block;filter:blur(0.8px);opacity:0.78">asswordNotRequired, NormalAccount</span></div>
 <div class="a" style="left:0.00px;top:192.46px;width:134.40px;height:1.00px;background:#EFEDE4"></div>
 <div class="a" style="left:134.40px;top:191.16px;width:347.30px;height:3.60px;background:linear-gradient(rgba(239,237,228,0),rgba(239,237,228,0.55) 50%,rgba(239,237,228,0))"></div>
 <div class="a" style="left:481.70px;top:192.46px;width:60.10px;height:1.00px;background:#EFEDE4"></div>
 <div class="t" style="left:5.20px;top:184.72px;font-size:8.5px;color:#000;letter-spacing:0.557px;">AccountControlComputed</div>
 <div class="t" style="left:131.20px;top:184.72px;font-size:8.5px;color:#000;">0</div>
 <div class="a" style="left:0.00px;top:202.94px;width:134.40px;height:1.00px;background:#EFEDE4"></div>
 <div class="a" style="left:134.40px;top:201.64px;width:347.30px;height:3.60px;background:linear-gradient(rgba(239,237,228,0),rgba(239,237,228,0.55) 50%,rgba(239,237,228,0))"></div>
 <div class="a" style="left:481.70px;top:202.94px;width:60.10px;height:1.00px;background:#EFEDE4"></div>
 <div class="t" style="left:5.20px;top:195.20px;font-size:8.5px;color:#000;letter-spacing:0.432px;">AccountFlagsComputed</div>
 <div class="a" style="left:0.00px;top:213.42px;width:134.40px;height:1.00px;background:#EFEDE4"></div>
 <div class="a" style="left:134.40px;top:212.12px;width:347.30px;height:3.60px;background:linear-gradient(rgba(239,237,228,0),rgba(239,237,228,0.55) 50%,rgba(239,237,228,0))"></div>
 <div class="a" style="left:481.70px;top:213.42px;width:60.10px;height:1.00px;background:#EFEDE4"></div>
 <div class="t" style="left:5.20px;top:205.68px;font-size:8.5px;color:#000;letter-spacing:0.363px;">ObjectSID</div>
 <div class="t" style="left:131.20px;top:205.68px;font-size:8.5px;color:#000;letter-spacing:0.563px"><span style="display:inline-block;filter:blur(0.55px);opacity:0.9">S</span><span style="display:inline-block;filter:blur(0.8px);opacity:0.78">-1-5-21-2875528734-2222509822-2030598912-23591</span></div>
 <div class="a" style="left:0.00px;top:223.90px;width:134.40px;height:1.00px;background:#EFEDE4"></div>
 <div class="a" style="left:134.40px;top:222.60px;width:347.30px;height:3.60px;background:linear-gradient(rgba(239,237,228,0),rgba(239,237,228,0.55) 50%,rgba(239,237,228,0))"></div>
 <div class="a" style="left:481.70px;top:223.90px;width:60.10px;height:1.00px;background:#EFEDE4"></div>
 <div class="t" style="left:5.20px;top:216.16px;font-size:8.5px;color:#000;letter-spacing:0.147px;">ObjectGUID</div>
 <div class="t" style="left:131.20px;top:216.16px;font-size:8.5px;color:#000;letter-spacing:0.821px"><span style="display:inline-block;filter:blur(0.55px);opacity:0.9"></span><span style="display:inline-block;filter:blur(0.8px);opacity:0.78">a1f2b4cd-9089-4f1f-b1e0-a6c1-2f5ed6a91844</span></div>
 <div class="a" style="left:126.00px;top:14.80px;width:1.00px;height:204.40px;background:#EFEDE4"></div>
 <div class="a" style="left:490.20px;top:14.80px;width:1.00px;height:204.40px;background:#EFEDE4"></div>
 <div class="a" style="left:541.80px;top:0.00px;width:12.60px;height:218.20px;background:linear-gradient(90deg,#EEEDE5,#FDFDFA)"></div>
 <div class="a" style="left:542.40px;top:1.40px;width:10.40px;height:10.80px;border:1px solid #BCCCF4;border-radius:2px;background:linear-gradient(135deg,#E4EBFE,#C3D3FD)"></div>
 <svg class="a" style="left:544.40px;top:4.40px" width="7" height="5" viewBox="0 0 7 5"><path d="M0.7 4 L3.5 1.2 L6.3 4" stroke="#4D6185" stroke-width="1.4" fill="none"/></svg>
 <div class="a" style="left:542.40px;top:13.60px;width:10.40px;height:150.80px;border:1px solid #B2C6F5;border-radius:2px;background:linear-gradient(90deg,#CFDCFD,#BDD0FC 50%,#B6CAF9)"></div>
 <div class="a" style="left:545.00px;top:86.20px;width:5.00px;height:1.00px;background:#D4E0FD"></div>
 <div class="a" style="left:545.00px;top:88.20px;width:5.00px;height:1.00px;background:#D4E0FD"></div>
 <div class="a" style="left:545.00px;top:90.20px;width:5.00px;height:1.00px;background:#D4E0FD"></div>
 <div class="a" style="left:542.40px;top:206.00px;width:10.40px;height:10.80px;border:1px solid #BCCCF4;border-radius:2px;background:linear-gradient(135deg,#E4EBFE,#C3D3FD)"></div>
 <svg class="a" style="left:544.40px;top:209.20px" width="7" height="5" viewBox="0 0 7 5"><path d="M0.7 1 L3.5 3.8 L6.3 1" stroke="#4D6185" stroke-width="1.4" fill="none"/></svg>
</div>
<div class="a" style="left:5.20px;top:334.20px;width:806.60px;height:36.00px;border:1px solid #D0D0BF;border-radius:3.5px"></div>
<div class="a" style="left:10.80px;top:332.20px;width:41.00px;height:4.00px;background:#ECE9D8"></div>
<div class="t" style="left:12.60px;top:330.63px;font-size:8.6px;color:#0046D5;letter-spacing:0.335px;">Accounts</div>
<div class="t" style="left:19.80px;top:340.23px;font-size:8.6px;color:#000;letter-spacing:0.341px;">Last Name</div>
<div class="a" style="left:17.00px;top:350.20px;width:126.20px;height:15.60px;background:#fff;border:1px solid #A5B9D5"></div>
<div class="t" style="left:151.40px;top:340.23px;font-size:8.6px;color:#000;letter-spacing:0.396px;">First Name</div>
<div class="a" style="left:149.10px;top:350.20px;width:126.50px;height:15.60px;background:#fff;border:1px solid #A5B9D5"></div>
<div class="t" style="left:283.60px;top:340.23px;font-size:8.6px;color:#000;letter-spacing:0.519px;">Account Id</div>
<div class="a" style="left:281.40px;top:350.20px;width:71.80px;height:15.60px;background:#fff;border:1px solid #A5B9D5"></div>
<div class="a" style="left:361.40px;top:349.10px;width:72.40px;height:16.10px;border:1px solid #2F5A88;border-radius:2.5px;background:linear-gradient(#FFFFFF,#F7F6F1 55%,#ECEAE0);box-shadow:inset 0 -1.5px 0 #DCD7C6, inset -1px 0 0 #E6E2D4"></div>
<div class="t" style="left:370.50px;top:354.13px;font-size:8.6px;color:#000;letter-spacing:0.257px;">Find Account</div>
<div class="t" style="left:519.50px;top:357.52px;font-size:8.7px;color:#0000FF;letter-spacing:0.250px;text-decoration:underline;text-underline-offset:0.9px;">Find Multiple Accounts</div>
<div class="a" style="left:621.10px;top:339.10px;width:9.80px;height:9.80px;border:1.2px solid #3D6A99;background:linear-gradient(135deg,#DCDCD7,#FBFBF9)"></div>
<svg class="a" style="left:621.10px;top:339.10px" width="10" height="10" viewBox="0 0 10 10"><path d="M2.3 4.6 L4.1 6.6 L7.6 2.8" stroke="#21A121" stroke-width="1.7" fill="none"/></svg>
<div class="t" style="left:635.80px;top:340.63px;font-size:8.6px;color:#000;letter-spacing:0.504px;">Clear search after successful retrieval</div>
<div class="a" style="left:621.10px;top:355.00px;width:9.80px;height:9.80px;border:1.2px solid #3D6A99;background:linear-gradient(135deg,#DCDCD7,#FBFBF9)"></div>
<svg class="a" style="left:621.10px;top:355.00px" width="10" height="10" viewBox="0 0 10 10"><path d="M2.3 4.6 L4.1 6.6 L7.6 2.8" stroke="#21A121" stroke-width="1.7" fill="none"/></svg>
<div class="t" style="left:635.80px;top:356.63px;font-size:8.6px;color:#000;letter-spacing:0.432px;">Display Disabled Accounts</div>
<div class="a" style="left:5.40px;top:380.20px;width:633.00px;height:138.60px;border:1px solid #D0D0BF;border-radius:3.5px"></div>
<div class="a" style="left:10.60px;top:378.20px;width:149.60px;height:4.00px;background:#ECE9D8"></div>
<div class="t" style="left:12.40px;top:376.73px;font-size:8.6px;color:#0046D5;letter-spacing:0.581px;">Groups (hit &lt;enter&gt; to add to list)</div>
<div class="a" style="left:17.20px;top:388.20px;width:210.00px;height:15.40px;background:#fff;border:1px solid #A5B9D5"></div>
<div class="a" style="left:214.40px;top:389.30px;width:11.70px;height:13.20px;background:linear-gradient(135deg,#E2EAFE,#B9CCF9);border-radius:1.5px"></div>
<svg class="a" style="left:217.00px;top:393.50px" width="7" height="5" viewBox="0 0 7 5"><path d="M0.9 1 L3.3 3.6 L5.7 1" stroke="#4D6185" stroke-width="1.5" fill="none"/></svg>
<div class="a" style="left:17.00px;top:405.20px;width:210.40px;height:70.60px;background:#808080;border:1.4px solid #333"></div>
<div class="a" style="left:18.40px;top:406.40px;width:207.60px;height:15.80px;background:#fff"></div>
<div class="a" style="left:18.40px;top:406.40px;width:6.60px;height:15.80px;background:linear-gradient(90deg,#F4F3EC,#EDEBE0);border-right:1px solid #CFCAB6;border-bottom:1px solid #CFCAB6"></div>
<div class="t" style="left:235.80px;top:392.83px;font-size:8.6px;color:#000;letter-spacing:0.524px;">Comparison Type</div>
<div class="a" style="left:233.40px;top:405.20px;width:102.00px;height:15.60px;background:#fff;border:1px solid #A5B9D5"></div>
<div class="a" style="left:322.60px;top:406.30px;width:11.70px;height:13.40px;background:linear-gradient(135deg,#E2EAFE,#B9CCF9);border-radius:1.5px"></div>
<svg class="a" style="left:325.20px;top:410.60px" width="7" height="5" viewBox="0 0 7 5"><path d="M0.9 1 L3.3 3.6 L5.7 1" stroke="#4D6185" stroke-width="1.5" fill="none"/></svg>
<div class="a" style="left:341.00px;top:388.10px;width:210.40px;height:15.60px;background:#fff;border:1px solid #A5B9D5"></div>
<div class="a" style="left:538.60px;top:389.20px;width:11.70px;height:13.40px;background:linear-gradient(135deg,#E2EAFE,#B9CCF9);border-radius:1.5px"></div>
<svg class="a" style="left:541.20px;top:393.50px" width="7" height="5" viewBox="0 0 7 5"><path d="M0.9 1 L3.3 3.6 L5.7 1" stroke="#4D6185" stroke-width="1.5" fill="none"/></svg>
<div class="a" style="left:341.00px;top:405.30px;width:211.20px;height:70.30px;background:#808080;border:1.4px solid #333"></div>
<div class="a" style="left:342.40px;top:406.50px;width:208.40px;height:15.70px;background:#fff"></div>
<div class="a" style="left:342.40px;top:406.50px;width:6.60px;height:15.70px;background:linear-gradient(90deg,#F4F3EC,#EDEBE0);border-right:1px solid #CFCAB6;border-bottom:1px solid #CFCAB6"></div>
<div class="a" style="left:17.20px;top:481.50px;width:59.10px;height:15.70px;background:#fff;border:1px solid #A5B9D5"></div>
<div class="a" style="left:63.50px;top:482.60px;width:11.70px;height:13.50px;background:linear-gradient(135deg,#E2EAFE,#B9CCF9);border-radius:1.5px"></div>
<svg class="a" style="left:66.10px;top:486.95px" width="7" height="5" viewBox="0 0 7 5"><path d="M0.9 1 L3.3 3.6 L5.7 1" stroke="#4D6185" stroke-width="1.5" fill="none"/></svg>
<div class="t s" style="left:20.60px;top:485.51px;font-size:8.4px;color:#000;">OR</div>
<div class="a" style="left:82.10px;top:481.00px;width:71.70px;height:15.70px;border:1px solid #2F5A88;border-radius:2.5px;background:linear-gradient(#FFFFFF,#F7F6F1 55%,#ECEAE0);box-shadow:inset 0 -1.5px 0 #DCD7C6, inset -1px 0 0 #E6E2D4"></div>
<div class="t" style="left:95.80px;top:485.63px;font-size:8.6px;color:#000;letter-spacing:0.369px;">Get Group</div>
<div class="t" style="left:240.20px;top:483.12px;font-size:8.7px;color:#0000FF;letter-spacing:0.443px;text-decoration:underline;text-underline-offset:0.9px;text-shadow:0.25px 0 0 rgba(0,0,255,0.5);">Clear all  list items</div>
<div class="a" style="left:341.20px;top:481.60px;width:58.90px;height:15.60px;background:#fff;border:1px solid #A5B9D5"></div>
<div class="a" style="left:387.30px;top:482.70px;width:11.70px;height:13.40px;background:linear-gradient(135deg,#E2EAFE,#B9CCF9);border-radius:1.5px"></div>
<svg class="a" style="left:389.90px;top:487.00px" width="7" height="5" viewBox="0 0 7 5"><path d="M0.9 1 L3.3 3.6 L5.7 1" stroke="#4D6185" stroke-width="1.5" fill="none"/></svg>
<div class="t s" style="left:344.60px;top:485.56px;font-size:8.4px;color:#000;">OR</div>
<div class="a" style="left:405.80px;top:481.20px;width:93.30px;height:16.50px;border:1px solid #2F5A88;border-radius:2.5px;background:linear-gradient(#FFFFFF,#F7F6F1 55%,#ECEAE0);box-shadow:inset 0 -1.5px 0 #DCD7C6, inset -1px 0 0 #E6E2D4"></div>
<div class="t" style="left:412.10px;top:486.23px;font-size:8.6px;color:#000;letter-spacing:0.485px;">Group Comparison</div>
<div class="a" style="left:644.60px;top:381.00px;width:166.00px;height:137.80px;border:1px solid #D0D0BF;border-radius:3.5px"></div>
<div class="a" style="left:649.90px;top:379.00px;width:84.60px;height:4.00px;background:#ECE9D8"></div>
<div class="t" style="left:651.70px;top:376.53px;font-size:8.6px;color:#0046D5;letter-spacing:0.481px;">Domains to Search</div>
<div class="a" style="left:651.00px;top:389.00px;width:154.60px;height:86.60px;background:#fff;border:1.3px solid #333"></div>
<div class="a" style="left:656.40px;top:391.50px;width:9.80px;height:9.80px;border:1.2px solid #7A96B8;background:linear-gradient(135deg,#DCDCD7,#F4F4F0)"></div>
<div class="t" style="left:670.70px;top:392.85px;font-size:9.2px;color:#C4C4C4;letter-spacing:0.279px;">mydomain.com</div>
<div class="a" style="left:656.40px;top:404.20px;width:9.80px;height:9.80px;border:1.2px solid #3D6A99;background:linear-gradient(135deg,#DCDCD7,#FBFBF9)"></div>
<svg class="a" style="left:656.40px;top:404.20px" width="10" height="10" viewBox="0 0 10 10"><path d="M2.3 4.6 L4.1 6.6 L7.6 2.8" stroke="#21A121" stroke-width="1.7" fill="none"/></svg>
<div class="t" style="left:670.70px;top:405.68px;font-size:9.0px;color:#333;letter-spacing:0.391px;filter:blur(0.9px);opacity:0.8;">ams.gblxint.com</div>
<div class="a" style="left:652.00px;top:481.20px;width:62.40px;height:13.60px;border:1px solid #2F5A88;border-radius:2.5px;background:linear-gradient(#FFFFFF,#F7F6F1 55%,#ECEAE0);box-shadow:inset 0 -1.5px 0 #DCD7C6, inset -1px 0 0 #E6E2D4"></div>
<div class="t" style="left:656.70px;top:484.43px;font-size:8.6px;color:#000;letter-spacing:0.477px;">Add Domain</div>
<div class="a" style="left:717.50px;top:481.20px;width:89.10px;height:13.60px;border:1px solid #2F5A88;border-radius:2.5px;background:linear-gradient(#FFFFFF,#F7F6F1 55%,#ECEAE0);box-shadow:inset 0 -1.5px 0 #DCD7C6, inset -1px 0 0 #E6E2D4"></div>
<div class="t" style="left:722.20px;top:484.53px;font-size:8.6px;color:#000;letter-spacing:0.345px;">Refresh Group List</div>
<div class="a" style="left:646.60px;top:501.00px;width:163.00px;height:15.60px;background:linear-gradient(#DCD8C6,#EEEBDF 25%,#F1EFE6 70%,#E6E3D6);border-top:1.4px solid #B0AC98"></div>
<div class="t s" style="left:649.40px;top:506.13px;font-size:8.6px;color:#000;letter-spacing:-0.304px;">Validation Complete.</div>
<div class="a" style="left:3.00px;top:521.80px;width:810.40px;height:16.20px;background:linear-gradient(#ECE9D8 0,#C4C0AE 0.6px,#C4C0AE 1.2px,#EFEDE2 2.2px,#EEEBDF 60%,#ECE9D8)"></div>
<div class="t s" style="left:5.80px;top:528.28px;font-size:8.2px;color:#000;letter-spacing:0.108px;">Ready.</div>
<div class="a" style="left:468.00px;top:524.80px;width:75.00px;height:11.20px;background:#fff;border:1px solid #7C8A96;border-radius:2px"></div>
<div class="a" style="left:550.60px;top:524.50px;width:1.00px;height:12.50px;background:#C9C5B4"></div>
<div class="t s" style="left:552.80px;top:528.28px;font-size:8.2px;color:#000;letter-spacing:0.010px;">Record Count: 1</div>
<div class="a" style="left:656.40px;top:524.50px;width:1.00px;height:12.50px;background:#C9C5B4"></div>
<div class="t s" style="left:657.70px;top:528.28px;font-size:8.2px;color:#000;letter-spacing:-0.111px;">Execution Time (ms): 1266</div>
<div class="t s" style="left:763.00px;top:528.28px;font-size:8.2px;color:#2828FF;letter-spacing:-0.027px;">Settings</div>
<svg class="a" style="left:796.6px;top:529.6px" width="6" height="4" viewBox="0 0 6 4"><path d="M0.5 0.5 L5.5 0.5 L3 3.3Z" fill="#000"/></svg>
<div class="a" style="left:811.20px;top:529.00px;width:1.30px;height:1.30px;background:#A8A494;box-shadow:0.8px 0.8px 0 #FFFFFF"></div>
<div class="a" style="left:808.10px;top:532.10px;width:1.30px;height:1.30px;background:#A8A494;box-shadow:0.8px 0.8px 0 #FFFFFF"></div>
<div class="a" style="left:811.20px;top:532.10px;width:1.30px;height:1.30px;background:#A8A494;box-shadow:0.8px 0.8px 0 #FFFFFF"></div>
<div class="a" style="left:805.00px;top:535.00px;width:1.30px;height:1.30px;background:#A8A494;box-shadow:0.8px 0.8px 0 #FFFFFF"></div>
<div class="a" style="left:808.10px;top:535.00px;width:1.30px;height:1.30px;background:#A8A494;box-shadow:0.8px 0.8px 0 #FFFFFF"></div>
<div class="a" style="left:811.20px;top:535.00px;width:1.30px;height:1.30px;background:#A8A494;box-shadow:0.8px 0.8px 0 #FFFFFF"></div>
<svg class="a" style="left:411.8px;top:16.8px" width="12" height="17" viewBox="0 0 12 17"><path d="M0.8 0.8 L0.8 12.6 L3.6 10 L5.6 14.6 L7.4 13.8 L5.5 9.4 L9.3 9.3 Z" fill="#fff" stroke="#000" stroke-width="1" stroke-linejoin="miter"/></svg>
</body></html>
